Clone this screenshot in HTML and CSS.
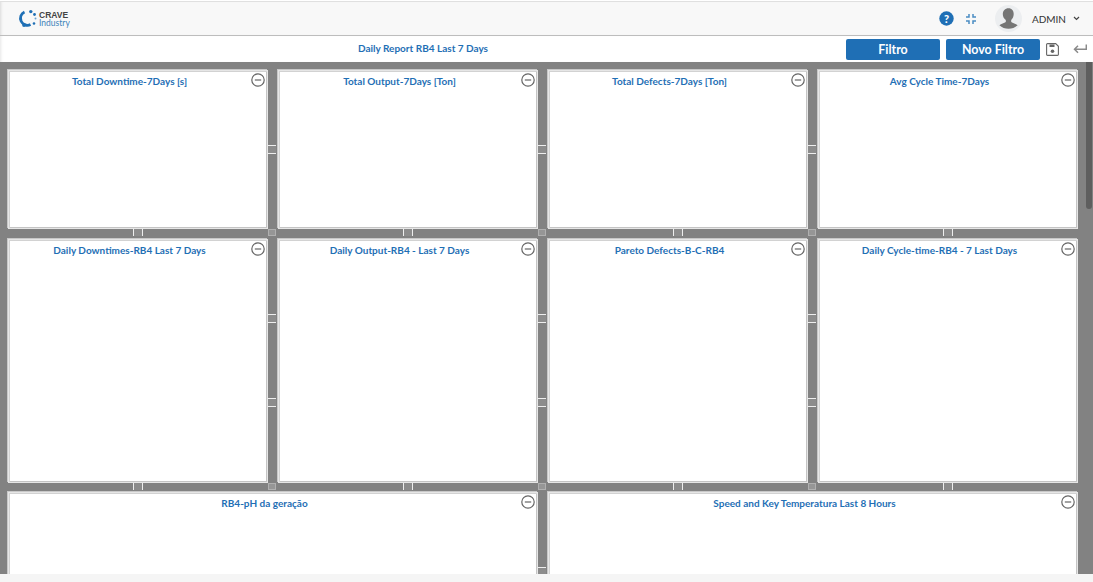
FILE: index.html
```html
<!DOCTYPE html>
<html lang="pt">
<head>
<meta charset="utf-8">
<title>Daily Report RB4 Last 7 Days</title>
<link rel="stylesheet" href="styles.css">
</head>
<body>
<header class="topbar">
  <div class="logo">
    <svg class="logo-mark" width="20" height="20" viewBox="0 0 20 20" fill="none">
      <path d="M6.500 2.900A7 7 0 1 0 12.500 15.600" stroke="#1f6fb5" stroke-width="2.800"/>
      <circle cx="6" cy="16" r="1.900" fill="#1f6fb5"/>
      <circle cx="12.800" cy="2.600" r="1.700" fill="#1f6fb5"/>
      <circle cx="16.500" cy="5.500" r="1.400" fill="#1f6fb5"/>
      <circle cx="17.500" cy="9.500" r="1" fill="#6aa3d0"/>
      <circle cx="16" cy="14.500" r="1.300" fill="#1f6fb5"/>
    </svg>
    <div class="logo-text"><strong>CRAVE</strong><span>Industry</span></div>
  </div>
  <div class="top-actions">
    <svg class="icon-help" width="15" height="15" viewBox="0 0 15 15"><circle cx="7.500" cy="7.500" r="7.200" fill="#1f6fb5"/><text x="7.500" y="11.500" text-anchor="middle" class="help-mark">?</text></svg>
    <svg class="icon-compress" width="10" height="10" viewBox="0 0 10 10" fill="none" stroke="#4a8cc2" stroke-width="1.500"><path d="M3 0v3H0M7 0v3h3M3 10V7H0M7 10V7h3"/></svg>
    <div class="avatar">
      <svg width="27" height="27" viewBox="0 0 27 27"><circle cx="13.500" cy="13.500" r="13.500" fill="#eceef0"/><path d="M13.500 3.200c3.400 0 5.200 2.600 5.200 5.800 0 2.600-1 4.700-2.500 5.900v2.200c1.500 1 4.600 1.700 6.400 3.200a13.500 13.500 0 0 1-18.200 0c1.800-1.500 4.900-2.200 6.400-3.200v-2.200C8.800 13.700 7.800 11.600 7.800 9c0-3.200 2.300-5.800 5.700-5.800z" fill="#757575"/></svg>
    </div>
    <span class="user">ADMIN</span>
    <svg class="chev" width="7" height="5" viewBox="0 0 7 5" fill="none" stroke="#444" stroke-width="1.200"><path d="M1 1l2.500 2.500L6 1"/></svg>
  </div>
</header>
<div class="subbar">
  <h1 class="report-title">Daily Report RB4 Last 7 Days</h1>
  <div class="sub-actions">
    <button class="btn btn-filter">Filtro</button>
    <button class="btn btn-new">Novo Filtro</button>
    <svg class="icon-save" width="13" height="13" viewBox="0 0 13 13" fill="none"><path d="M1.500 .6h8.200l2.700 2.700v8.200a.9.900 0 0 1-.9.900h-10a.9.900 0 0 1-.9-.9v-10a.9.900 0 0 1 .9-.9z" stroke="#666" stroke-width="1.100"/><path d="M3.500 1.500h5v2.500h-5z" fill="#666"/><circle cx="6.500" cy="8.200" r="1.800" fill="#666"/></svg>
    <svg class="icon-back" width="14" height="10" viewBox="0 0 14 10" fill="none" stroke="#8a8a8a" stroke-width="1.500"><path d="M13.300 .5v4.700H1.500M5 1.700L1.500 5.200 5 8.700"/></svg>
  </div>
</div>
<main class="board">
  <div class="grid">
    <section class="panel"><h2>Total Downtime-7Days [s]</h2><svg class="minus" viewBox="0 0 14 14"><circle cx="7" cy="7" r="6.200"/><path d="M3.800 7h6.400"/></svg><i class="grip-r"></i><i class="grip-b"></i><i class="cross"></i></section>
    <section class="panel"><h2>Total Output-7Days [Ton]</h2><svg class="minus" viewBox="0 0 14 14"><circle cx="7" cy="7" r="6.200"/><path d="M3.800 7h6.400"/></svg><i class="grip-r"></i><i class="grip-b"></i><i class="cross"></i></section>
    <section class="panel"><h2>Total Defects-7Days [Ton]</h2><svg class="minus" viewBox="0 0 14 14"><circle cx="7" cy="7" r="6.200"/><path d="M3.800 7h6.400"/></svg><i class="grip-r"></i><i class="grip-b"></i><i class="cross"></i></section>
    <section class="panel"><h2>Avg Cycle Time-7Days</h2><svg class="minus" viewBox="0 0 14 14"><circle cx="7" cy="7" r="6.200"/><path d="M3.800 7h6.400"/></svg><i class="grip-b"></i></section>
    <section class="panel"><h2>Daily Downtimes-RB4 Last 7 Days</h2><svg class="minus" viewBox="0 0 14 14"><circle cx="7" cy="7" r="6.200"/><path d="M3.800 7h6.400"/></svg><i class="grip-r"></i><i class="grip-r lower"></i><i class="grip-b"></i><i class="cross"></i></section>
    <section class="panel"><h2>Daily Output-RB4 - Last 7 Days</h2><svg class="minus" viewBox="0 0 14 14"><circle cx="7" cy="7" r="6.200"/><path d="M3.800 7h6.400"/></svg><i class="grip-r"></i><i class="grip-r lower"></i><i class="grip-b"></i><i class="cross"></i></section>
    <section class="panel"><h2>Pareto Defects-B-C-RB4</h2><svg class="minus" viewBox="0 0 14 14"><circle cx="7" cy="7" r="6.200"/><path d="M3.800 7h6.400"/></svg><i class="grip-r"></i><i class="grip-r lower"></i><i class="grip-b"></i><i class="cross"></i></section>
    <section class="panel"><h2>Daily Cycle-time-RB4 - 7 Last Days</h2><svg class="minus" viewBox="0 0 14 14"><circle cx="7" cy="7" r="6.200"/><path d="M3.800 7h6.400"/></svg><i class="grip-b"></i></section>
    <section class="panel span-2"><h2>RB4-pH da geração</h2><svg class="minus" viewBox="0 0 14 14"><circle cx="7" cy="7" r="6.200"/><path d="M3.800 7h6.400"/></svg><i class="grip-r"></i></section>
    <section class="panel span-2"><h2>Speed and Key Temperatura Last 8 Hours</h2><svg class="minus" viewBox="0 0 14 14"><circle cx="7" cy="7" r="6.200"/><path d="M3.800 7h6.400"/></svg></section>
  </div>
  <div class="scroll-thumb"></div>
</main>
<footer class="foot"></footer>
</body>
</html>
```
FILE: styles.css
```css
* { box-sizing: border-box; }
html, body { margin: 0; height: 100%; }
body {
  display: flex;
  flex-direction: column;
  height: 100vh;
  overflow: hidden;
  background: #fff;
  font-family: Lato, "Open Sans", sans-serif;
}
.topbar {
  height: 35px;
  flex: none;
  margin-top: 1px;
  background: #f8f8f8;
  border-top: 1px solid #e0e0e0;
  border-bottom: 1px solid #bdbdbd;
  box-shadow: inset 3px 0 3px -2px rgba(0, 0, 0, .12);
  display: flex;
  align-items: center;
  justify-content: space-between;
  padding: 0 13px 0 18px;
}
.logo { display: flex; align-items: center; gap: 1px; }
.logo-text { display: flex; flex-direction: column; line-height: 8px; }
.logo-text strong { font: 700 8.500px/8px "Liberation Sans", Arial, sans-serif; color: #444; }
.logo-text span { font-size: 8.500px; color: #3f83ba; }
.top-actions { display: flex; align-items: center; }
.icon-help { margin-right: 12px; }
.help-mark { font: 900 11px Lato, sans-serif; fill: #fff; }
.icon-compress { margin-right: 19px; }
.avatar { width: 27px; height: 27px; margin-right: 10px; }
.avatar svg { display: block; }
.user { font-size: 10px; color: #333; margin-right: 7px; }
.subbar {
  height: 26px;
  flex: none;
  display: flex;
  align-items: center;
  padding: 0 6px 0 0;
  box-shadow: inset 3px 0 3px -2px rgba(0, 0, 0, .1);
}
.report-title {
  margin: 0 0 2px;
  width: 846px;
  text-align: center;
  font-size: 10px;
  font-weight: 700;
  color: #1f6fb5;
}
.sub-actions { display: flex; align-items: center; }
.btn {
  height: 21px;
  border: 0;
  border-radius: 2px;
  background: #1f6fb5;
  color: #fff;
  font: 700 12.400px Lato, sans-serif;
  padding: 0;
}
.btn-filter { width: 94px; margin-right: 6px; }
.btn-new { width: 94px; margin-right: 6px; }
.icon-save { margin-right: 14px; }
.board {
  flex: 1;
  min-height: 0;
  position: relative;
  overflow: hidden;
  background: #828282;
  padding: 8px 0 0 8px;
}
.grid {
  display: grid;
  grid-template-columns: repeat(4, 260px);
  grid-template-rows: 160px 244px 300px;
  gap: 9px 10px;
}
.grid > :nth-child(-n+4) { margin-bottom: 1px; }
.panel {
  position: relative;
  background: #fff;
  border: 1px solid #e6e6e6;
  box-shadow: inset 1px 1px 0 #d2d2d2, inset -1px -1px 0 #c4c4c4, -1px -1px 0 #c8c8c8;
}
.span-2 { grid-column: span 2; }
.panel h2 {
  margin: 0;
  padding: 3px 17px 0 0;
  text-align: center;
  font-size: 10px;
  line-height: 14px;
  font-weight: 700;
  color: #1f6fb5;
}
.minus {
  position: absolute;
  top: 2px;
  right: 2px;
  width: 14px;
  height: 14px;
  fill: none;
  stroke: #666;
  stroke-width: 1.200;
}
.grip-r {
  position: absolute;
  left: 100%;
  top: 74px;
  width: 8px;
  height: 9px;
  margin-left: 1px;
  background: #8c8c8c;
  border-top: 1px solid #eee;
  border-bottom: 1px solid #eee;
}
.grip-r.lower { top: 158px; }
.grip-b {
  position: absolute;
  top: 100%;
  left: 50%;
  width: 10px;
  height: 7px;
  margin-left: -5px;
  margin-top: 1px;
  background: #8c8c8c;
  border-left: 1px solid #eee;
  border-right: 1px solid #eee;
}
.cross {
  position: absolute;
  left: 100%;
  top: 100%;
  width: 8px;
  height: 7px;
  margin: 1px 0 0 1px;
  background: #969696;
  border: 1px solid #b0b0b0;
}
.scroll-thumb {
  position: absolute;
  right: 1px;
  top: 0;
  width: 6px;
  height: 147px;
  border-radius: 0 0 3px 3px;
  background: #5e5e5e;
}
.foot { height: 8px; flex: none; background: #f5f5f5; }
```
